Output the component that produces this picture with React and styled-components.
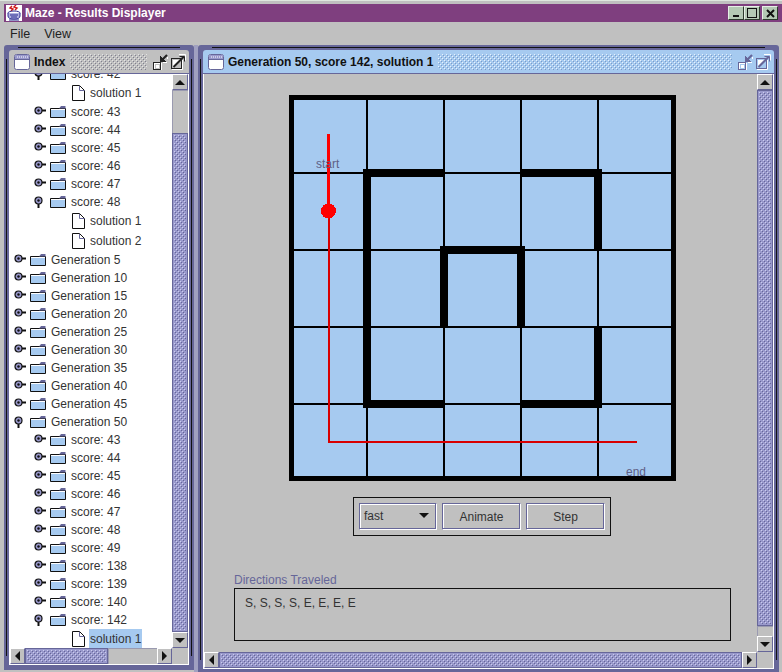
import React from 'react'
import styled, { createGlobalStyle, css } from 'styled-components'

const BLUE = '#a6caf0'
const GREY = '#c0c0c0'
const SLATE = '#666699'
const LILAC = '#9999cc'

const GlobalStyle = createGlobalStyle`
  html, body {
    margin: 0;
    padding: 0;
    background: ${GREY};
  }
  body {
    font-family: "Liberation Sans", Arial, sans-serif;
    font-size: 12px;
    color: #222;
  }
`

const square = (color, x, y) => `conic-gradient(from 270deg at 1px 1px, ${color} 25%, transparent 0) ${x}px ${y}px / 4px 4px`

const bumps = (light, dark) => css`
  background:
    ${square(light, 0, 0)},
    ${square(light, 2, 2)},
    ${square(dark, 1, 1)},
    ${square(dark, 3, 3)};
`

const Window = styled.div`
  width: 782px;
  height: 672px;
  overflow: hidden;
  display: flex;
  flex-direction: column;
  background: ${GREY};
  border-top: 1px solid #dfe8df;
  box-sizing: border-box;
`

const TitleBar = styled.div`
  margin: 3px 0 0 4px;
  height: 18px;
  background: #7f3f7f;
  display: flex;
  align-items: center;
  color: #fff;
  font-weight: bold;
  font-size: 12px;
  letter-spacing: 0;
  flex: none;
`

const AppIcon = styled.svg`
  width: 16px;
  height: 16px;
  margin: 0 3px 0 2px;
  flex: none;
`

const TitleText = styled.span`
  flex: 1;
`

const WindowButton = styled.div`
  width: 14px;
  height: 12px;
  margin-right: ${(p) => p.$gap || 0}px;
  background: #b4c8b4;
  border: 1px solid;
  border-color: #e6efe6 #2c3a2c #2c3a2c #e6efe6;
  display: flex;
  align-items: center;
  justify-content: center;
`

const MenuBar = styled.div`
  height: 23px;
  display: flex;
  align-items: center;
  padding-left: 10px;
  gap: 14px;
  flex: none;
  font-size: 12.5px;
`

const Desktop = styled.div`
  flex: 1;
  display: flex;
  align-items: flex-start;
  padding-left: 4px;
  background: ${GREY};
  min-height: 0;
`

const FrameGap = styled.div`
  width: 4px;
  align-self: stretch;
  flex: none;
  background: #a0a0c0;
`

const Frame = styled.div`
  position: relative;
  box-sizing: border-box;
  width: ${(p) => p.$width}px;
  height: ${(p) => p.$height}px;
  padding: 5px;
  background: ${SLATE};
  border-radius: 3px 3px 0 0;
  display: flex;
  flex-direction: column;
  flex: none;

  &::before {
    content: '';
    position: absolute;
    left: 14px;
    right: 14px;
    top: 2px;
    height: 1px;
    background: #111;
  }
  &::after {
    content: '';
    position: absolute;
    top: 14px;
    bottom: 14px;
    right: 2px;
    width: 1px;
    background: #111;
  }
`

const FrameEdge = styled.span`
  position: absolute;
  top: 14px;
  bottom: 14px;
  left: 2px;
  width: 1px;
  background: #111;
`

const FrameTitle = styled.div`
  height: 23px;
  flex: none;
  display: flex;
  align-items: center;
  padding-left: 5px;
  font-weight: bold;
  font-size: 12px;
  color: #111;
  background: ${(p) => (p.$active ? BLUE : GREY)};
  border-bottom: 1px solid ${SLATE};
  border-radius: 3px 3px 0 0;
`

const FrameIcon = styled.svg`
  width: 16px;
  height: 16px;
  margin-right: 4px;
  flex: none;
`

const Bumps = styled.div`
  flex: 1;
  height: 16px;
  margin: 0 6px 0 5px;
  ${(p) => (p.$active ? bumps('#e8f2fc', '#7c9cc8') : bumps('#e4e4e4', '#808090'))}
`

const FrameButton = styled.svg`
  width: 15px;
  height: 16px;
  margin-right: ${(p) => p.$gap}px;
  flex: none;
`

const FrameBody = styled.div`
  flex: 1;
  min-height: 0;
  display: grid;
  grid-template-columns: 1fr 16px;
  grid-template-rows: 1fr 16px;
  border: solid #fff;
  border-width: 0 1px 1px 1px;
  background: ${GREY};
`

const Tree = styled.div`
  overflow: hidden;
  background: #fff;
  min-height: 0;
`

const TreeInner = styled.div`
  margin-top: -9px;
`

const Row = styled.div`
  height: ${(p) => (p.$leaf ? 20 : 18)}px;
  display: flex;
  align-items: center;
  padding-left: ${(p) => p.$indent}px;
  white-space: nowrap;
  color: #333;
`

const Label = styled.span`
  line-height: 20px;
  padding: 0 1px;
  background: ${(p) => (p.$selected ? BLUE : 'transparent')};
`

const RowIcon = styled.svg`
  flex: none;
  margin-right: ${(p) => p.$gap}px;
`

const Canvas = styled.div`
  display: flex;
  flex-direction: column;
  padding: 21px 27px 0 30px;
  min-height: 0;
  overflow: hidden;
`

const Maze = styled.svg`
  display: block;
  width: 387px;
  height: 386px;
  flex: none;
  margin-left: 55px;
`

const Controls = styled.div`
  align-self: flex-start;
  margin: 16px 0 0 119px;
  padding: 5px;
  display: flex;
  gap: 5px;
  border: 1px solid #111;
`

const etched = css`
  box-sizing: border-box;
  height: 27px;
  background: ${GREY};
  border: 1px solid;
  border-color: ${SLATE} #fff #fff ${SLATE};
  box-shadow: inset -1px -1px 0 ${SLATE}, inset 1px 1px 0 #fff;
`

const Combo = styled.div`
  ${etched}
  width: 78px;
  display: flex;
  align-items: center;
  justify-content: space-between;
  padding: 0 4px 2px 4px;
  font-size: 12px;
  color: #333;
`

const ComboArrow = styled.span`
  width: 0;
  height: 0;
  border: 5px solid transparent;
  border-top: 5px solid #111;
  border-bottom: 0;
  margin-right: 3px;
`

const Button = styled.button`
  ${etched}
  width: 79px;
  padding: 0;
  font: 12px "Liberation Sans", Arial, sans-serif;
  color: #333;
`

const FieldLabel = styled.div`
  margin-top: 37px;
  height: 14px;
  line-height: 14px;
  color: ${SLATE};
`

const Directions = styled.div`
  box-sizing: border-box;
  width: 497px;
  height: 53px;
  margin-top: 1px;
  padding: 7px 10px;
  border: 1px solid #111;
  color: #333;
  line-height: 14px;
`

const ScrollV = styled.div`
  display: flex;
  flex-direction: column;
  min-height: 0;
  background: ${GREY};
`

const ScrollH = styled.div`
  display: flex;
  background: ${GREY};
  min-width: 0;
`

const ArrowButton = styled.div`
  box-sizing: border-box;
  flex: none;
  width: ${(p) => (p.$horizontal ? 15 : 16)}px;
  height: 16px;
  background: ${GREY};
  border: 1px solid;
  border-color: #fff ${SLATE} ${SLATE} #fff;
  display: flex;
  align-items: center;
  justify-content: center;
`

const arrowShapes = {
  up: 'border-width: 0 5px 5px 5px; border-color: transparent transparent #111 transparent;',
  down: 'border-width: 5px 5px 0 5px; border-color: #111 transparent transparent transparent;',
  left: 'border-width: 5px 5px 5px 0; border-color: transparent #111 transparent transparent;',
  right: 'border-width: 5px 0 5px 5px; border-color: transparent transparent transparent #111;',
}

const Arrow = styled.span`
  width: 0;
  height: 0;
  border-style: solid;
  ${(p) => arrowShapes[p.$dir]}
`

const Thumb = styled.div`
  box-sizing: border-box;
  flex: ${(p) => (p.$size ? `0 0 ${p.$size}px` : 1)};
  border: 1px solid ${SLATE};
  background-color: ${LILAC};
  position: relative;

  &::before {
    content: '';
    position: absolute;
    inset: 1px;
    ${bumps('#ccccee', '#666699')}
  }
`

const Track = styled.div`
  flex: ${(p) => (p.$size ? `0 0 ${p.$size}px` : 1)};
  background: ${GREY};
  box-shadow: inset 1px 1px 0 #9a9ab0;
`

const Corner = styled.div`
  background: ${GREY};
`

const CoffeeIcon = () => (
  <AppIcon viewBox="0 0 16 16">
    <rect width="16" height="16" fill="#fff" />
    <path d="M6 1l-2 2 3 1-2 2M10 0l-2 2 3 1-2 2" stroke="#d01818" strokeWidth="1.4" fill="none" />
    <ellipse cx="8" cy="8" rx="6" ry="2" fill="none" stroke="#2a2a90" />
    <path d="M2 8v3c0 2 2 3 5 3h2c3 0 5-1 5-3V8" fill="#b0b0e0" stroke="#2a2a90" />
    <path d="M3 15h10" stroke="#2a2a90" />
    <path d="M4 10h8M5 12h6" stroke="#2a2a90" />
  </AppIcon>
)

const WindowGlyph = () => (
  <FrameIcon viewBox="0 0 16 16">
    <rect x="0.5" y="0.5" width="15" height="15" rx="2" fill="#fff" stroke={SLATE} />
    <rect x="1" y="1" width="14" height="4" fill={LILAC} />
    <path d="M3 3h1M5 3h1M7 3h1M9 3h1M11 3h1M13 3h1" stroke="#fff" />
    <path d="M1 5.5h14" stroke={SLATE} />
  </FrameIcon>
)

const IconifyGlyph = ({ gap, dark }) => (
  <FrameButton viewBox="0 0 15 16" $gap={gap} shapeRendering="crispEdges">
    <rect x="1.5" y="9.5" width="7" height="7" fill="none" stroke="#fff" />
    <rect x="0.5" y="8.5" width="7" height="7" fill="none" stroke={dark} />
    <rect x="3" y="11" width="3" height="3" fill="#fff" />
    <path d="M7 2v6h6z" fill={dark} />
    <path d="M9 6l5-5" stroke={dark} strokeWidth="2.2" shapeRendering="auto" />
    <path d="M14 3v2M10 8h4" stroke="#fff" />
  </FrameButton>
)

const MaximizeGlyph = ({ gap, dark }) => (
  <FrameButton viewBox="0 0 15 16" $gap={gap}>
    <rect x="0.5" y="4.5" width="10" height="10" fill="none" stroke={dark} />
    <path d="M1 15.5h10.5V6" fill="none" stroke="#fff" />
    <path d="M2 13V6h7z" fill="#fff" />
    <path d="M2.5 13L13 2.5" stroke={dark} strokeWidth="2" />
    <path d="M8.5 2.5h5v5" fill="none" stroke={dark} />
    <path d="M8 0.5h6.5v6" fill="none" stroke="#fff" />
  </FrameButton>
)

const Handle = ({ open }) => (
  <RowIcon width="12" height="12" viewBox="0 0 12 12" $gap={4}>
    {open ? (
      <path d="M4.5 7v5" stroke="#111" strokeWidth="2" />
    ) : (
      <path d="M7 4.5h5" stroke="#111" strokeWidth="2" />
    )}
    <circle cx="4.5" cy="4.5" r="3.5" fill={LILAC} stroke="#111" strokeWidth="1.2" />
    <circle cx="4.5" cy="4.5" r="1.2" fill="#111" />
  </RowIcon>
)

const Folder = () => (
  <RowIcon width="16" height="14" viewBox="0 0 16 14" $gap={4}>
    <path d="M0.5 3.5h15v9h-15z" fill={BLUE} stroke="#111" />
    <path d="M1 4.5h14" stroke="#fff" />
    <path d="M9 3.5l2-2.5h4.5v2.5z" fill={SLATE} />
  </RowIcon>
)

const Doc = () => (
  <RowIcon width="13" height="16" viewBox="0 0 13 16" $gap={4}>
    <path d="M0.5 0.5h7l5 5v10h-12z" fill="#fff" stroke="#111" />
    <path d="M7.5 1v4.5h5" fill="none" stroke={SLATE} />
  </RowIcon>
)

const FolderRow = ({ depth, open, children }) => (
  <Row $indent={depth * 20 + 4}>
    <Handle open={open} />
    <Folder />
    <Label>{children}</Label>
  </Row>
)

const LeafRow = ({ children, selected }) => (
  <Row $leaf $indent={62}>
    <Doc />
    <Label $selected={selected}>{children}</Label>
  </Row>
)

const GRID_X = [367, 444, 521, 598]
const GRID_Y = [173, 250, 327, 404]
const WALLS_H = [[363, 444, 173], [521, 602, 173], [440, 525, 250], [363, 444, 404], [521, 602, 404]]
const WALLS_V = [[367, 169, 408], [598, 169, 250], [598, 327, 408], [444, 246, 327], [521, 246, 327]]

const MazeView = () => (
  <Maze viewBox="289 95 387 386" shapeRendering="crispEdges">
    <rect x="289" y="95" width="387" height="386" fill="#000" />
    <rect x="294" y="100" width="377" height="376" fill={BLUE} />
    {GRID_X.map((x) => <rect key={x} x={x - 1} y="100" width="2" height="376" fill="#000" />)}
    {GRID_Y.map((y) => <rect key={y} x="294" y={y - 1} width="377" height="2" fill="#000" />)}
    {WALLS_H.map(([a, b, y]) => <rect key={`${a}-${y}`} x={a} y={y - 4} width={b - a} height="8" fill="#000" />)}
    {WALLS_V.map(([x, a, b]) => <rect key={`${x}-${a}`} x={x - 4} y={a} width="8" height={b - a} fill="#000" />)}
    <rect x="327" y="134" width="3" height="78" fill="#ff0000" />
    <rect x="328" y="212" width="2" height="231" fill="#d80000" />
    <rect x="328" y="441" width="309" height="2" fill="#d80000" />
    <circle cx="328.5" cy="211" r="7.5" fill="#ff0000" />
    <text x="316" y="168" fontSize="12" fontFamily="Liberation Sans" fill="#5f5f85" shapeRendering="auto">start</text>
    <text x="626" y="476" fontSize="12" fontFamily="Liberation Sans" fill="#5f5f85" shapeRendering="auto">end</text>
  </Maze>
)

const scores = (list) => list.map((s) => <FolderRow key={s} depth={1}>score: {s}</FolderRow>)

export default function App() {
  return (
    <Window>
      <GlobalStyle />
      <TitleBar>
        <CoffeeIcon />
        <TitleText>Maze - Results Displayer</TitleText>
        <WindowButton>
          <svg width="8" height="8"><rect x="1" y="6" width="6" height="2" fill="#111" /></svg>
        </WindowButton>
        <WindowButton $gap={2}>
          <svg width="10" height="10"><rect x="0.5" y="0.5" width="9" height="9" fill="none" stroke="#111" /></svg>
        </WindowButton>
        <WindowButton $gap={4}>
          <svg width="9" height="9"><path d="M1 1l7 7M8 1l-7 7" stroke="#111" strokeWidth="2" /></svg>
        </WindowButton>
      </TitleBar>
      <MenuBar>
        <span>File</span>
        <span>View</span>
      </MenuBar>
      <Desktop>
        <Frame $width={190} $height={625}>
          <FrameEdge />
          <FrameTitle>
            <WindowGlyph />
            Index
            <Bumps />
            <IconifyGlyph gap={3} dark="#222" />
            <MaximizeGlyph gap={3} dark="#222" />
          </FrameTitle>
          <FrameBody>
            <Tree>
              <TreeInner>
                <FolderRow depth={1} open>score: 42</FolderRow>
                <LeafRow>solution 1</LeafRow>
                {scores([43, 44, 45, 46, 47])}
                <FolderRow depth={1} open>score: 48</FolderRow>
                <LeafRow>solution 1</LeafRow>
                <LeafRow>solution 2</LeafRow>
                {[5, 10, 15, 20, 25, 30, 35, 40, 45].map((g) => (
                  <FolderRow key={g} depth={0}>Generation {g}</FolderRow>
                ))}
                <FolderRow depth={0} open>Generation 50</FolderRow>
                {scores([43, 44, 45, 46, 47, 48, 49, 138, 139, 140])}
                <FolderRow depth={1} open>score: 142</FolderRow>
                <LeafRow selected>solution 1</LeafRow>
              </TreeInner>
            </Tree>
            <ScrollV>
              <ArrowButton><Arrow $dir="up" /></ArrowButton>
              <Track $size={43} />
              <Thumb />
              <ArrowButton><Arrow $dir="down" /></ArrowButton>
            </ScrollV>
            <ScrollH>
              <ArrowButton $horizontal><Arrow $dir="left" /></ArrowButton>
              <Thumb $size={83} />
              <Track />
              <ArrowButton $horizontal><Arrow $dir="right" /></ArrowButton>
            </ScrollH>
            <Corner />
          </FrameBody>
        </Frame>
        <FrameGap />
        <Frame $width={581} $height={629}>
          <FrameEdge />
          <FrameTitle $active>
            <WindowGlyph />
            Generation 50, score 142, solution 1
            <Bumps $active />
            <IconifyGlyph gap={3} dark={SLATE} />
            <MaximizeGlyph gap={3} dark={SLATE} />
          </FrameTitle>
          <FrameBody>
            <Canvas>
              <MazeView />
              <Controls>
                <Combo>
                  fast
                  <ComboArrow />
                </Combo>
                <Button>Animate</Button>
                <Button>Step</Button>
              </Controls>
              <FieldLabel>Directions Traveled</FieldLabel>
              <Directions>S, S, S, S, E, E, E, E</Directions>
            </Canvas>
            <ScrollV>
              <ArrowButton><Arrow $dir="up" /></ArrowButton>
              <Thumb />
              <Track $size={10} />
              <ArrowButton><Arrow $dir="down" /></ArrowButton>
            </ScrollV>
            <ScrollH>
              <ArrowButton $horizontal><Arrow $dir="left" /></ArrowButton>
              <Thumb />
              <ArrowButton $horizontal><Arrow $dir="right" /></ArrowButton>
            </ScrollH>
            <Corner />
          </FrameBody>
        </Frame>
      </Desktop>
    </Window>
  )
}
